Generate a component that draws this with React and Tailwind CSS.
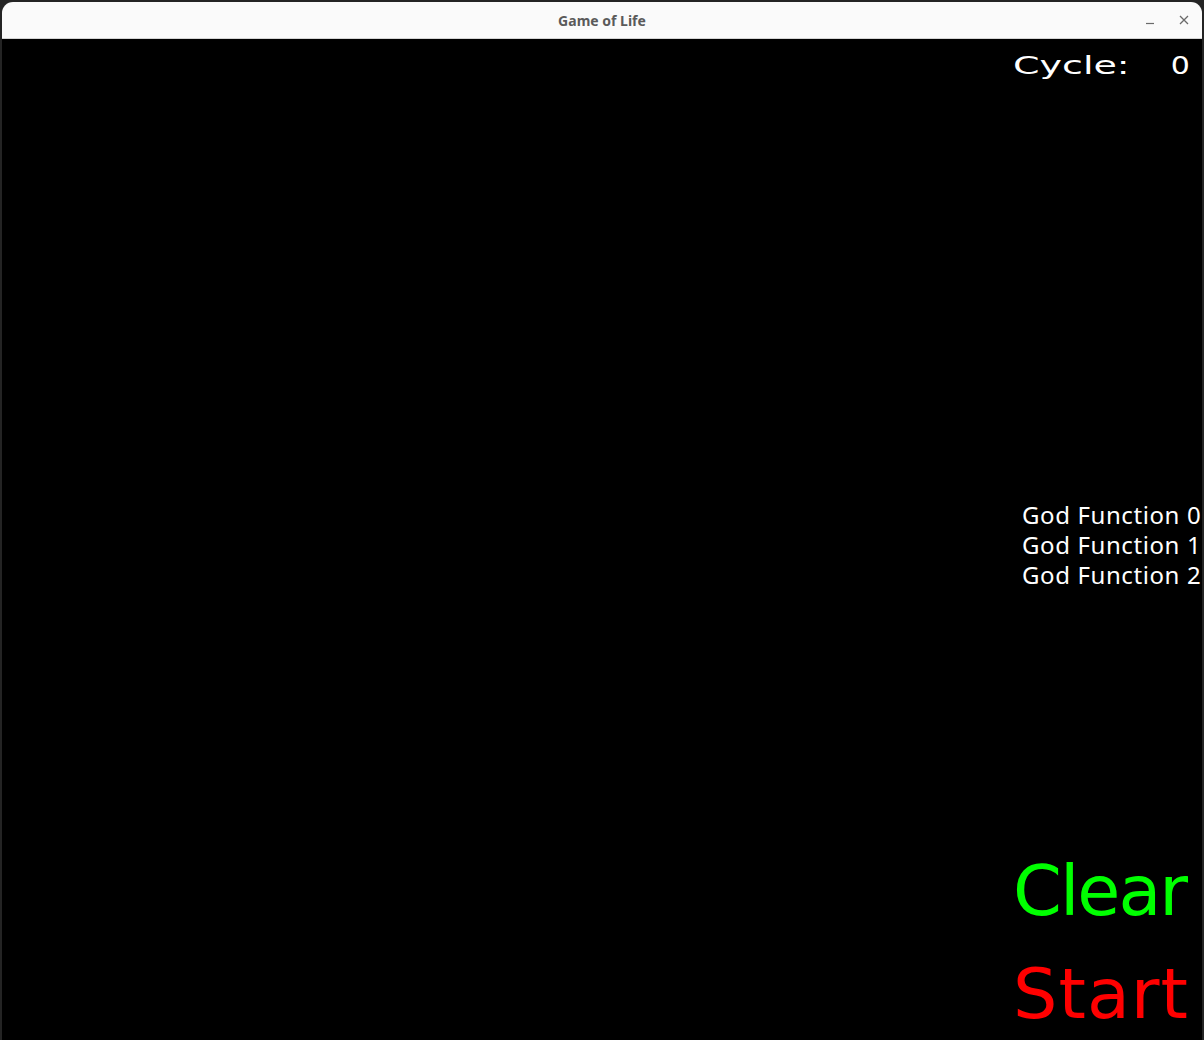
import React from "react";

const App = () => {
    return (
        <div className="w-[1204px] h-[1040px] bg-[#242424] px-[2px] pt-[2px] overflow-hidden">
            <div className="flex flex-col h-full">
                {/*Title bar*/}
                <div className="relative h-[37px] shrink-0 bg-[#fafafa] rounded-t-[11px] border-b border-[#d4d4d4] flex items-center justify-center">
                    <span className="text-[14px] font-bold text-[#5a5a5a]" style={{ fontFamily: '"Noto Sans", sans-serif' }}>
                        Game of Life
                    </span>
                    <div className="absolute right-[12px] top-0 h-full flex items-center gap-[22px] text-[#6a6a6a]">
                        <svg className="w-[12px] h-[12px]" viewBox="0 0 12 12">
                            <path d="M2 9.5h8" stroke="currentColor" strokeWidth="1.2" />
                        </svg>
                        <svg className="w-[12px] h-[12px]" viewBox="0 0 12 12">
                            <path d="M2 2l8 8M10 2L2 10" stroke="currentColor" strokeWidth="1.3" />
                        </svg>
                    </div>
                </div>

                {/*Canvas*/}
                <div className="flex-1 bg-black flex justify-end">
                    <div className="w-[189px] flex flex-col">
                        <div className="mt-[12px] h-[30px] flex items-center justify-between pr-[12px] text-white" style={{ fontFamily: '"DejaVu Sans", sans-serif' }}>
                            <span className="text-[25px] origin-left scale-x-[1.52] inline-block">Cycle:</span>
                            <span className="text-[25px] origin-right scale-x-[1.2] inline-block">0</span>
                        </div>

                        <div className="mt-[419px] pl-[9px] flex flex-col whitespace-nowrap text-white text-[24px] leading-[30px] tracking-[0.6px]" style={{ fontFamily: '"Noto Sans", sans-serif' }}>
                            <span>God Function 0</span>
                            <span>God Function 1</span>
                            <span>God Function 2</span>
                        </div>

                        <div className="mt-[250px] flex flex-col whitespace-nowrap text-[70px]" style={{ fontFamily: '"DejaVu Sans", sans-serif' }}>
                            <span className="text-[#00ff00] leading-[103px] tracking-[-2px]">Clear</span>
                            <span className="mt-[11px] text-[#ff0000] leading-[80px] tracking-[1px]">Start</span>
                        </div>
                    </div>
                </div>
            </div>
        </div>
    );
};

export default App;
